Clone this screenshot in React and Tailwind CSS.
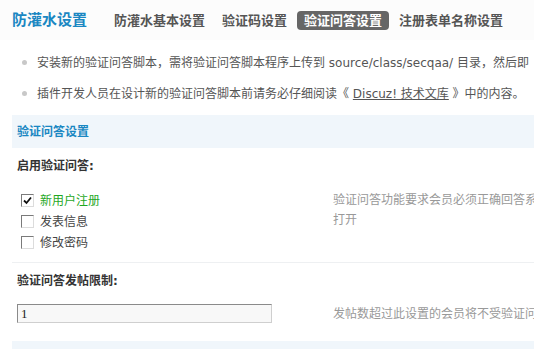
import React from 'react';

const font = { fontFamily: '"DejaVu Sans", "Noto Sans CJK SC", sans-serif' };

const Tab = ({ label, active }) => (
  <span
    className={
      active
        ? 'px-[7px] h-[19px] leading-[19px] rounded-[4px] bg-[#666] text-white font-bold text-[13px]'
        : 'px-[7px] h-[19px] leading-[19px] text-[#555] font-bold text-[13px]'
    }
  >
    {label}
  </span>
);

const Checkbox = ({ checked, label, green }) => (
  <div className="h-[21px] flex items-center pl-[4px]">
    <span className="shrink-0 w-[13px] h-[13px] bg-white border border-t-[#7a7a7a] border-l-[#7a7a7a] border-b-[#dcdcdc] border-r-[#dcdcdc] flex items-center justify-center">
      {checked && (
        <svg width="9" height="9" viewBox="0 0 9 9">
          <path d="M1 4.5 L3.5 7 L8 1.5" stroke="#111" strokeWidth="1.8" fill="none" />
        </svg>
      )}
    </span>
    <span className={green ? 'ml-[6px] text-[12px] text-[#1fa81f]' : 'ml-[6px] text-[12px] text-[#444]'}>{label}</span>
  </div>
);

export default function App() {
  return (
    <div className="w-[534px] h-[349px] overflow-hidden bg-white whitespace-nowrap" style={font}>
      {/* header */}
      <div className="h-[40px] flex items-center pl-[12px] bg-[#fcfcfc]">
        <span className="shrink-0 text-[15px] font-bold text-[#1a87c2] mr-[20px]">防灌水设置</span>
        <div className="flex items-center gap-[3px]">
          <Tab label="防灌水基本设置" />
          <Tab label="验证码设置" />
          <Tab label="验证问答设置" active />
          <Tab label="注册表单名称设置" />
        </div>
      </div>

      {/* tips */}
      <div className="mt-[7px] text-[12px] text-[#555]">
        <div className="h-[31px] flex items-center pl-[22px]">
          <span className="shrink-0 w-[5px] h-[5px] rounded-full bg-[#c8c8c8] mr-[10px]" />
          <span>安装新的验证问答脚本，需将验证问答脚本程序上传到 source/class/secqaa/ 目录，然后即</span>
        </div>
        <div className="h-[31px] flex items-center pl-[22px]">
          <span className="shrink-0 w-[5px] h-[5px] rounded-full bg-[#c8c8c8] mr-[10px]" />
          <span>
            插件开发人员在设计新的验证问答脚本前请务必仔细阅读《 <span className="underline">Discuz! 技术文库</span> 》中的内容。
          </span>
        </div>
      </div>

      {/* section */}
      <div className="mt-[6px] ml-[12px] h-[33px] bg-[#f0f6fb] pl-[5px] flex items-center text-[12px] font-bold text-[#1a87c2]">
        验证问答设置
      </div>

      <div className="ml-[12px]">
        <div className="h-[36px] flex items-center pl-[5px] text-[12px] font-bold text-[#333]">启用验证问答:</div>
        <div className="mt-[6px] flex">
          <div className="shrink-0 w-[321px] pl-[5px]">
            <Checkbox checked label="新用户注册" green />
            <Checkbox label="发表信息" />
            <Checkbox label="修改密码" />
          </div>
          <div className="text-[12px] leading-[20px] text-[#999]">
            <div>验证问答功能要求会员必须正确回答系</div>
            <div>打开</div>
          </div>
        </div>
        <div className="mt-[9px] border-b border-[#eef0f2]" />

        <div className="h-[36px] flex items-center pl-[5px] text-[12px] font-bold text-[#333]">验证问答发帖限制:</div>
        <div className="mt-[5px] flex items-center">
          <div className="shrink-0 w-[321px] pl-[5px]">
            <div
              className="w-[255px] h-[19px] bg-[#f8f8f8] border border-t-[#8a8a8a] border-l-[#8a8a8a] border-b-[#cfcfcf] border-r-[#cfcfcf] pl-[3px] text-[13px] leading-[17px] text-[#222]"
              style={{ fontFamily: '"Liberation Serif", serif' }}
            >
              1
            </div>
          </div>
          <div className="text-[12px] text-[#999]">发帖数超过此设置的会员将不受验证问</div>
        </div>
        <div className="mt-[18px] h-[20px] bg-[#f0f6fb]" />
      </div>
    </div>
  );
}
